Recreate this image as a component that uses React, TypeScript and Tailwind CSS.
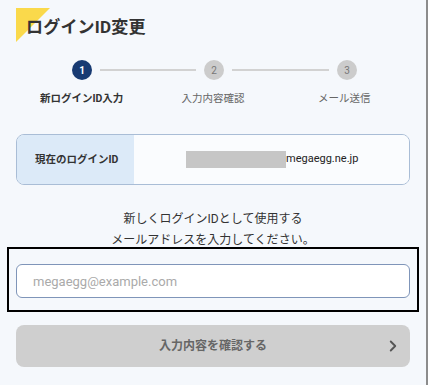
import { ChevronRight } from "lucide-react";

const steps = [
  { no: 1, label: "新ログインID入力", active: true },
  { no: 2, label: "入力内容確認", active: false },
  { no: 3, label: "メール送信", active: false },
];

export default function App() {
  return (
    <div
      className="relative w-[428px] h-[385px] overflow-hidden bg-[#f5f8fc] border-r-2 border-[#8c8c8c] text-[#333]"
      style={{ fontFamily: "Roboto, 'Noto Sans CJK JP', sans-serif" }}
    >
      {/* title */}
      <div className="relative h-[46px] pl-[26px] pt-[15px]">
        <div className="absolute left-[16px] top-[8px] w-0 h-0 border-t-[34px] border-r-[34px] border-t-[#fad94b] border-r-transparent" />
        <h1 className="relative text-[17px] font-bold leading-[24px] tracking-[0.2px]">ログインID変更</h1>
      </div>

      {/* stepper */}
      <div className="flex items-center mt-[14px] pl-[72px] h-[20px]">
        {steps.map((s, i) => (
          <div key={s.no} className="flex items-center">
            <div
              className={
                s.active
                  ? "w-[20px] h-[20px] rounded-full bg-[#183a72] text-white text-[10px] font-bold flex items-center justify-center"
                  : "w-[20px] h-[20px] rounded-full bg-[#cccccc] text-[#777] text-[10px] flex items-center justify-center"
              }
            >
              {s.no}
            </div>
            {i < steps.length - 1 && (
              <div className={i === 0 ? "mx-[8px] w-[96px] h-[2px] bg-[#d2d2d2]" : "mx-[8px] w-[97px] h-[2px] bg-[#d2d2d2]"} />
            )}
          </div>
        ))}
      </div>
      <div className="grid grid-cols-3 mx-[16px] mt-[12px]">
        {steps.map((s) => (
          <div
            key={s.no}
            className={
              s.active
                ? "text-center text-[10.5px] font-bold leading-[14px] text-[#333]"
                : "text-center text-[10.5px] leading-[14px] text-[#666]"
            }
          >
            {s.label}
          </div>
        ))}
      </div>

      {/* current id */}
      <div className="mx-[16px] mt-[28px] h-[51px] flex rounded-[8px] border border-[#a9bdd6] overflow-hidden">
        <div className="w-[117px] bg-[#dceaf8] flex items-center pl-[18px] text-[10.5px] font-bold">
          現在のログインID
        </div>
        <div className="flex-1 bg-[#fafcfe] flex items-center pl-[52px]">
          <div className="w-[100px] h-[17px] bg-[#c6c6c6]" />
          <span className="text-[11px] text-[#222]">megaegg.ne.jp</span>
        </div>
      </div>

      {/* message */}
      <p className="mt-[24px] text-center text-[12px] leading-[21px] text-[#333]">
        新しくログインIDとして使用する
        <br />
        メールアドレスを入力してください。
      </p>

      {/* input */}
      <div className="mx-[7px] -mt-[4px] h-[65px] border-[2.5px] border-black px-[7px] pt-[15px]">
        <input
          className="w-full h-[34px] rounded-[6px] border border-[#7f95b9] bg-white px-[16px] text-[13px] placeholder:text-[#aaa] outline-none"
          placeholder="megaegg@example.com"
        />
      </div>

      {/* button */}
      <button className="mx-[16px] mt-[13px] w-[394px] h-[42px] rounded-[8px] bg-[#cfcfcf] relative flex items-center justify-center text-[12px] font-bold text-[#666]">
        入力内容を確認する
        <ChevronRight className="absolute right-[8px] top-[12px] w-[18px] h-[18px] text-[#555]" strokeWidth={2.5} />
      </button>
    </div>
  );
}
